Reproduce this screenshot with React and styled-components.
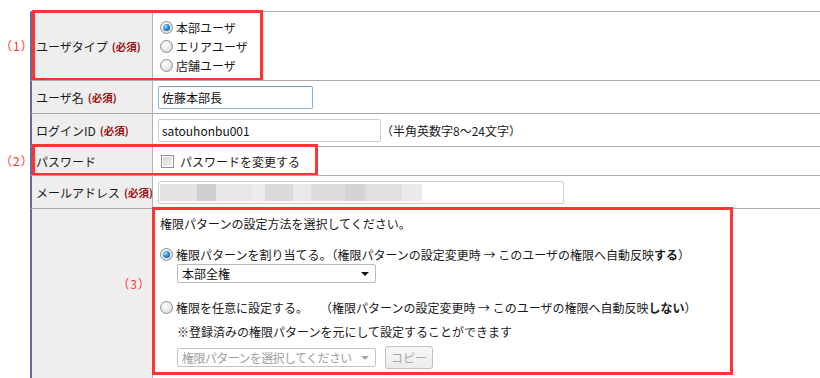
import React from 'react';
import styled, { createGlobalStyle, css } from 'styled-components';

const Global = createGlobalStyle`
  html, body { margin: 0; padding: 0; background: #fff; }
  body {
    font-family: "Noto Sans CJK JP", "Noto Sans", sans-serif;
    font-size: 12px;
    color: #1a1a1a;
  }
`;

const Page = styled.div`
  width: 820px;
  padding-top: 11px;
  overflow: hidden;
`;

const Row = styled.div`
  position: relative;
  display: flex;
  height: ${(p) => p.$h}px;
`;

const Gutter = styled.div`
  width: 30px;
  flex: none;
  display: flex;
  align-items: center;
  justify-content: flex-start;
  color: #f33;
  font-size: 12px;
  line-height: 1;
  white-space: nowrap;
`;

const LabelCell = styled.div`
  box-sizing: border-box;
  width: 123px;
  flex: none;
  border-left: 2px solid #68689c;
  border-right: 1px solid #b4b4b4;
  border-top: 1px solid #aaaaaa;
  background: #eeeeee;
  display: flex;
  align-items: center;
  padding-left: 4px;
  white-space: nowrap;
  ${(p) =>
    p.$top &&
    css`
      align-items: flex-start;
      justify-content: flex-end;
      padding-top: 66px;
      padding-right: 1px;
    `}
`;

const Required = styled.span`
  color: #9b1010;
  font-weight: bold;
  font-size: 10.5px;
  margin-left: 4px;
`;

const Annot = styled.span`
  color: #f33;
  font-size: 12px;
  letter-spacing: 1px;
`;

const ValueCell = styled.div`
  box-sizing: border-box;
  flex: 1;
  border-top: 1px solid #aaaaaa;
  display: flex;
  flex-direction: column;
  justify-content: ${(p) => (p.$start ? 'flex-start' : 'center')};
  padding-left: ${(p) => (p.$pl ?? 5)}px;
  padding-top: ${(p) => p.$pt || 0}px;
`;

const Line = styled.div`
  display: flex;
  align-items: center;
  height: ${(p) => p.$h || 19}px;
  white-space: nowrap;
  padding-left: ${(p) => p.$indent || 0}px;
  margin-top: ${(p) => p.$mt || 0}px;
  gap: ${(p) => p.$gap ?? 3}px;
`;

const Text = styled.span`
  white-space: pre;
`;

const Spacer = styled.span`
  display: inline-block;
  width: ${(p) => p.$w}px;
`;

const Radio = styled.span`
  position: relative;
  box-sizing: border-box;
  display: inline-block;
  width: 13px;
  height: 13px;
  border-radius: 50%;
  border: 1px solid #8e8f8f;
  background: radial-gradient(circle at 40% 35%, #ffffff 0%, #e6e6e6 55%, #c9c9c9 100%);
  flex: none;
  ${(p) =>
    p.$checked &&
    css`
      &::after {
        content: '';
        position: absolute;
        left: 2px;
        top: 2px;
        width: 7px;
        height: 7px;
        border-radius: 50%;
        background: radial-gradient(circle at 35% 35%, #a6e3ff 0%, #2e8bd6 45%, #0c4f8f 100%);
      }
    `}
`;

const Check = styled.span`
  box-sizing: border-box;
  display: inline-block;
  width: 13px;
  height: 13px;
  border: 1px solid #8e8f8f;
  background: linear-gradient(135deg, #d4d4d4 0%, #f4f4f4 100%);
  box-shadow: inset 0 0 0 1px #fff;
  flex: none;
`;

const TextField = styled.div`
  box-sizing: border-box;
  width: ${(p) => p.$w}px;
  height: 23px;
  border: 1px solid ${(p) => (p.$focus ? '#86b3dc' : '#c9cdd2')};
  ${(p) => p.$focus && css`border-top-color: #6d9cc9;`}
  border-radius: 2px;
  padding: 0 3px;
  display: flex;
  align-items: center;
  font-size: 12px;
  color: #111;
  background: #fff;
  flex: none;
  overflow: hidden;
`;

const Hint = styled.span`
  margin-left: 0px;
`;

const Blur = styled.span`
  display: inline-block;
  width: ${(p) => p.$w}px;
  height: 17px;
  background: ${(p) => p.$c};
  flex: none;
`;

const BlurField = styled(TextField)`
  padding: 0;
  padding-left: 1px;
  align-items: center;
`;

const Select = styled.div`
  box-sizing: border-box;
  width: 199px;
  height: 19px;
  border: 1px solid ${(p) => (p.$disabled ? '#c4c4c4' : '#b9b9b9')};
  border-radius: 2px;
  background: #fff;
  display: flex;
  align-items: center;
  justify-content: space-between;
  padding: 0 6px 0 4px;
  color: ${(p) => (p.$disabled ? '#a0a0a0' : '#111')};
  font-size: 12px;
  letter-spacing: ${(p) => (p.$disabled ? '-0.6px' : '0')};
  flex: none;
  overflow: hidden;
  white-space: nowrap;
`;

const Arrow = styled.span`
  flex: none;
  width: 0;
  height: 0;
  border-left: 4px solid transparent;
  border-right: 4px solid transparent;
  border-top: 4px solid ${(p) => (p.$disabled ? '#a8a8a8' : '#111')};
`;

const Button = styled.div`
  box-sizing: border-box;
  width: 48px;
  height: 23px;
  border: 1px solid #c0c0c0;
  border-radius: 3px;
  background: linear-gradient(#f7f7f7, #ececec);
  color: #a8a8a8;
  display: flex;
  align-items: center;
  justify-content: center;
  font-size: 12px;
  margin-left: 9px;
  flex: none;
`;

const RedBox = styled.div`
  position: absolute;
  box-sizing: border-box;
  left: ${(p) => p.$l}px;
  top: ${(p) => p.$t}px;
  width: ${(p) => p.$w}px;
  height: ${(p) => p.$h}px;
  border: 3px solid #f33;
  pointer-events: none;
`;

const Strong = styled.b`
  font-weight: bold;
`;

const blurBlocks = [
  [37, '#e3e3e3'],
  [19, '#cfcfcf'],
  [36, '#e7e7e7'],
  [13, '#ececec'],
  [28, '#dadada'],
  [18, '#e9e9e9'],
  [34, '#dddddd'],
  [20, '#d4d4d4'],
  [37, '#e0e0e0'],
  [20, '#eaeaea'],
];

export default function App() {
  return (
    <>
      <Global />
      <Page>
        <Row $h={69}>
          <Gutter>
            <Annot>（1）</Annot>
          </Gutter>
          <LabelCell>
            ユーザタイプ<Required>(必須)</Required>
          </LabelCell>
          <ValueCell $pl={7}>
            <Line><Radio $checked /><Text>本部ユーザ</Text></Line>
            <Line><Radio /><Text>エリアユーザ</Text></Line>
            <Line><Radio /><Text>店舗ユーザ</Text></Line>
          </ValueCell>
          <RedBox $l={32} $t={-1} $w={231} $h={71} />
        </Row>

        <Row $h={33}>
          <Gutter />
          <LabelCell>
            ユーザ名<Required>(必須)</Required>
          </LabelCell>
          <ValueCell>
            <TextField $w={155} $focus>佐藤本部長</TextField>
          </ValueCell>
        </Row>

        <Row $h={33}>
          <Gutter />
          <LabelCell>
            ログインID<Required>(必須)</Required>
          </LabelCell>
          <ValueCell>
            <Line $h={23} $gap={0}>
              <TextField $w={223}>satouhonbu001</TextField>
              <Hint>（半角英数字8～24文字）</Hint>
            </Line>
          </ValueCell>
        </Row>

        <Row $h={29}>
          <Gutter>
            <Annot>（2）</Annot>
          </Gutter>
          <LabelCell>パスワード</LabelCell>
          <ValueCell $pl={8}>
            <Line $gap={6}><Check /><Text>パスワードを変更する</Text></Line>
          </ValueCell>
          <RedBox $l={32} $t={-2} $w={286} $h={32} />
        </Row>

        <Row $h={33}>
          <Gutter />
          <LabelCell>
            メールアドレス<Required>(必須)</Required>
          </LabelCell>
          <ValueCell>
            <BlurField $w={406}>
              {blurBlocks.map(([w, c], i) => (
                <Blur key={i} $w={w} $c={c} />
              ))}
            </BlurField>
          </ValueCell>
        </Row>

        <Row $h={180}>
          <Gutter />
          <LabelCell $top>
            <Annot>（3）</Annot>
          </LabelCell>
          <ValueCell $start $pl={7} $pt={5}>
            <Line $h={19}>
              <Text>権限パターンの設定方法を選択してください。</Text>
            </Line>
            <Line $h={19} $mt={12} $gap={3}>
              <Radio $checked />
              <Text>
                権限パターンを割り当てる。（権限パターンの設定変更時 → このユーザの権限へ自動反映<Strong>する</Strong>）
              </Text>
            </Line>
            <Line $h={19} $indent={17}>
              <Select>
                <span>本部全権</span>
                <Arrow />
              </Select>
            </Line>
            <Line $h={19} $mt={15} $gap={3}>
              <Radio />
              <Text>
                権限を任意に設定する。<Spacer $w={12} />（権限パターンの設定変更時 → このユーザの権限へ自動反映<Strong>しない</Strong>）
              </Text>
            </Line>
            <Line $h={19} $mt={5} $indent={17}>
              <Text>※登録済みの権限パターンを元にして設定することができます</Text>
            </Line>
            <Line $h={23} $mt={5} $indent={17} $gap={0}>
              <Select $disabled>
                <span>権限パターンを選択してください</span>
                <Arrow $disabled />
              </Select>
              <Button>コピー</Button>
            </Line>
          </ValueCell>
          <RedBox $l={152} $t={-1} $w={581} $h={168} />
        </Row>
      </Page>
    </>
  );
}
